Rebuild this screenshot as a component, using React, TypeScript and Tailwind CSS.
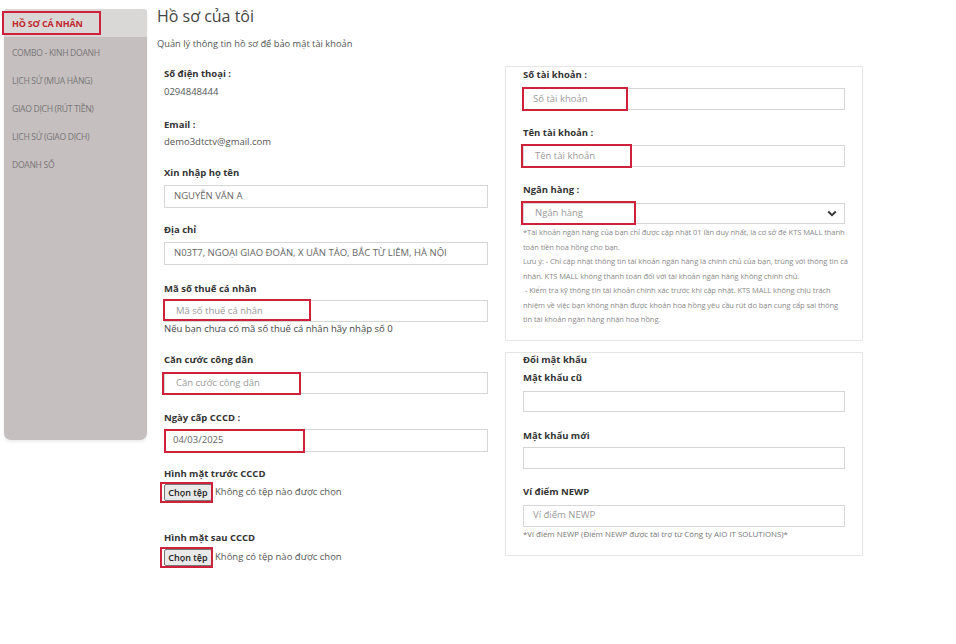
import React from "react";

const font = { fontFamily: '"Open Sans", "Noto Sans", sans-serif' };

function RedBox({ l, t, w, h }: { l: number; t: number; w: number; h: number }) {
  return (
    <div
      className="absolute border-2 border-[#d0213a] pointer-events-none"
      style={{ left: l, top: t, width: w, height: h }}
    />
  );
}

function Label({ children, className = "" }: { children: React.ReactNode; className?: string }) {
  return <div className={"text-[9.5px] leading-[14px] font-bold text-[#333] " + className}>{children}</div>;
}

function Input({
  value,
  placeholder,
  h = 22,
  className = "",
  pl = 9,
  children,
}: {
  value?: string;
  placeholder?: string;
  h?: number;
  className?: string;
  pl?: number;
  children?: React.ReactNode;
}) {
  return (
    <div
      className={"relative border border-[#d6d6d6] bg-white flex items-center text-[9.5px] " + className}
      style={{ height: h, paddingLeft: pl }}
    >
      {value ? (
        <span className="text-[#666]">{value}</span>
      ) : placeholder ? (
        <span className="text-[#9a9a9a]">{placeholder}</span>
      ) : null}
      {children}
    </div>
  );
}

function FileRow({ className = "" }: { className?: string }) {
  return (
    <div className={"relative flex items-center h-[17px] " + className}>
      <span className="h-[17px] w-[48px] border border-[#767676] bg-[#e9e9e9] rounded-[2px] text-[9px] leading-[15px] text-[#222] flex items-center justify-center font-semibold">
        Chọn tệp
      </span>
      <span className="ml-[3px] text-[9.5px] text-[#555]">Không có tệp nào được chọn</span>
      <RedBox l={-4} t={-2} w={53} h={21} />
    </div>
  );
}

export default function App() {
  const menu = ["COMBO - KINH DOANH", "LỊCH SỬ (MUA HÀNG)", "GIAO DỊCH (RÚT TIỀN)", "LỊCH SỬ (GIAO DỊCH)", "DOANH SỐ"];
  return (
    <div className="w-[956px] h-[644px] bg-white flex overflow-hidden" style={font}>
      {/* Sidebar */}
      <div className="ml-[4px] mt-[9px] w-[143px] h-[431px] bg-[#c5bfbf] rounded-t-[4px] rounded-b-[7px] shadow-[0_2px_3px_rgba(0,0,0,0.08)] flex flex-col">
        <div className="relative h-[28px] bg-[#dad7d7] rounded-t-[4px] flex items-center pl-[8px]">
          <span className="text-[9px] font-bold text-[#c0272d] tracking-[-0.2px] mt-[1px]">HỒ SƠ CÁ NHÂN</span>
          <RedBox l={-2} t={2} w={99} h={24} />
        </div>
        <div className="flex flex-col pl-[8px] pt-[9px] gap-[14px]">
          {menu.map((m) => (
            <div key={m} className="text-[8.6px] leading-[14px] text-[#777] tracking-[-0.3px]">
              {m}
            </div>
          ))}
        </div>
      </div>

      {/* Main */}
      <div className="ml-[10px] flex flex-col">
        <div className="mt-[4px] text-[16px] leading-[24px] text-[#444]">Hồ sơ của tôi</div>
        <div className="mt-[9px] text-[9.3px] leading-[14px] text-[#555]">Quản lý thông tin hồ sơ để bảo mật tài khoản</div>

        <div className="flex mt-[8px]">
          {/* Left column */}
          <div className="ml-[7px] w-[324px] flex flex-col mt-[8px]">
            <Label>Số điện thoại :</Label>
            <div className="mt-[4px] text-[9.5px] leading-[14px] text-[#555]">0294848444</div>
            <Label className="mt-[19px]">Email :</Label>
            <div className="mt-[3px] text-[9.5px] leading-[14px] text-[#555]">demo3dtctv@gmail.com</div>
            <Label className="mt-[17px]">Xin nhập họ tên</Label>
            <Input className="mt-[5px]" h={23} value="NGUYỄN VĂN A" />
            <Label className="mt-[15px]">Địa chỉ</Label>
            <Input className="mt-[5px]" h={23} value="N03T7, NGOẠI GIAO ĐOÀN, X UÂN TẢO, BẮC TỪ LIÊM, HÀ NỘI" />
            <Label className="mt-[17px]">Mã số thuế cá nhân</Label>
            <Input className="mt-[4px]" h={22} pl={11} placeholder="Mã số thuế cá nhân">
              <RedBox l={-2} t={-2} w={148} h={22} />
            </Input>
            <div className="text-[9.5px] leading-[14px] text-[#444]">Nếu bạn chưa có mã số thuế cá nhân hãy nhập số 0</div>
            <Label className="mt-[17px]">Căn cước công dân</Label>
            <Input className="mt-[5px]" h={22} pl={11} placeholder="Căn cước công dân">
              <RedBox l={-3} t={-1} w={139} h={23} />
            </Input>
            <Label className="mt-[17px]">Ngày cấp CCCD :</Label>
            <Input className="mt-[4px]" h={23} pl={8} value="04/03/2025">
              <RedBox l={-1} t={-1} w={141} h={24} />
            </Input>
            <Label className="mt-[15px]">Hình mặt trước CCCD</Label>
            <FileRow className="mt-[3px]" />
            <Label className="mt-[30px]">Hình mặt sau CCCD</Label>
            <FileRow className="mt-[4px]" />
          </div>

          {/* Right column */}
          <div className="ml-[17px] w-[358px] flex flex-col mt-[7px]">
            <div className="border border-[#e6e6e6] pl-[17px] pr-[17px] pt-[1px] pb-[13px]">
              <Label>Số tài khoản :</Label>
              <Input className="mt-[6px]" h={22} pl={9} placeholder="Số tài khoản">
                <RedBox l={-2} t={-2} w={106} h={24} />
              </Input>
              <Label className="mt-[16px]">Tên tài khoản :</Label>
              <Input className="mt-[5px]" h={22} pl={11} placeholder="Tên tài khoản">
                <RedBox l={-3} t={-2} w={111} h={24} />
              </Input>
              <Label className="mt-[16px]">Ngân hàng :</Label>
              <Input className="mt-[6px] justify-between pr-[6px]" h={21} pl={11} placeholder="Ngân hàng">
                <svg width="10" height="7" viewBox="0 0 10 7" className="mr-[1px]">
                  <path d="M1.2 1.5 L5 5.2 L8.8 1.5" fill="none" stroke="#333" strokeWidth="1.8" />
                </svg>
                <RedBox l={-3} t={-3} w={115} h={24} />
              </Input>
              <div className="mt-[1px] text-[7.5px] leading-[14.5px] text-[#8a8a8a] whitespace-nowrap tracking-[-0.05px]">
                <div>*Tài khoản ngân hàng của bạn chỉ được cập nhật 01 lần duy nhất, là cơ sở để KTS MALL thanh</div>
                <div>toán tiền hoa hồng cho bạn.</div>
                <div>Lưu ý: - Chỉ cập nhật thông tin tài khoản ngân hàng là chính chủ của bạn, trùng với thông tin cá</div>
                <div>nhân. KTS MALL không thanh toán đối với tài khoản ngân hàng không chính chủ.</div>
                <div>&nbsp;- Kiểm tra kỹ thông tin tài khoản chính xác trước khi cập nhật. KTS MALL không chịu trách</div>
                <div>nhiệm về việc bạn không nhận được khoản hoa hồng yêu cầu rút do bạn cung cấp sai thông</div>
                <div>tin tài khoản ngân hàng nhận hoa hồng.</div>
              </div>
            </div>

            <div className="mt-[11px] border border-[#e6e6e6] pl-[17px] pr-[17px] pt-[0px] pb-[15px]">
              <Label>Đổi mật khẩu</Label>
              <Label className="mt-[4px]">Mật khẩu cũ</Label>
              <Input className="mt-[6px]" h={21} />
              <Label className="mt-[17px]">Mật khẩu mới</Label>
              <Input className="mt-[4px]" h={22} />
              <Label className="mt-[16px]">Ví điểm NEWP</Label>
              <Input className="mt-[6px]" h={22} pl={9} placeholder="Ví điểm NEWP" />
              <div className="mt-[1px] text-[7.9px] leading-[12px] text-[#777] whitespace-nowrap">
                *Ví điểm NEWP (Điểm NEWP được tài trợ từ Công ty AIO IT SOLUTIONS)*
              </div>
            </div>
          </div>
        </div>
      </div>
    </div>
  );
}
